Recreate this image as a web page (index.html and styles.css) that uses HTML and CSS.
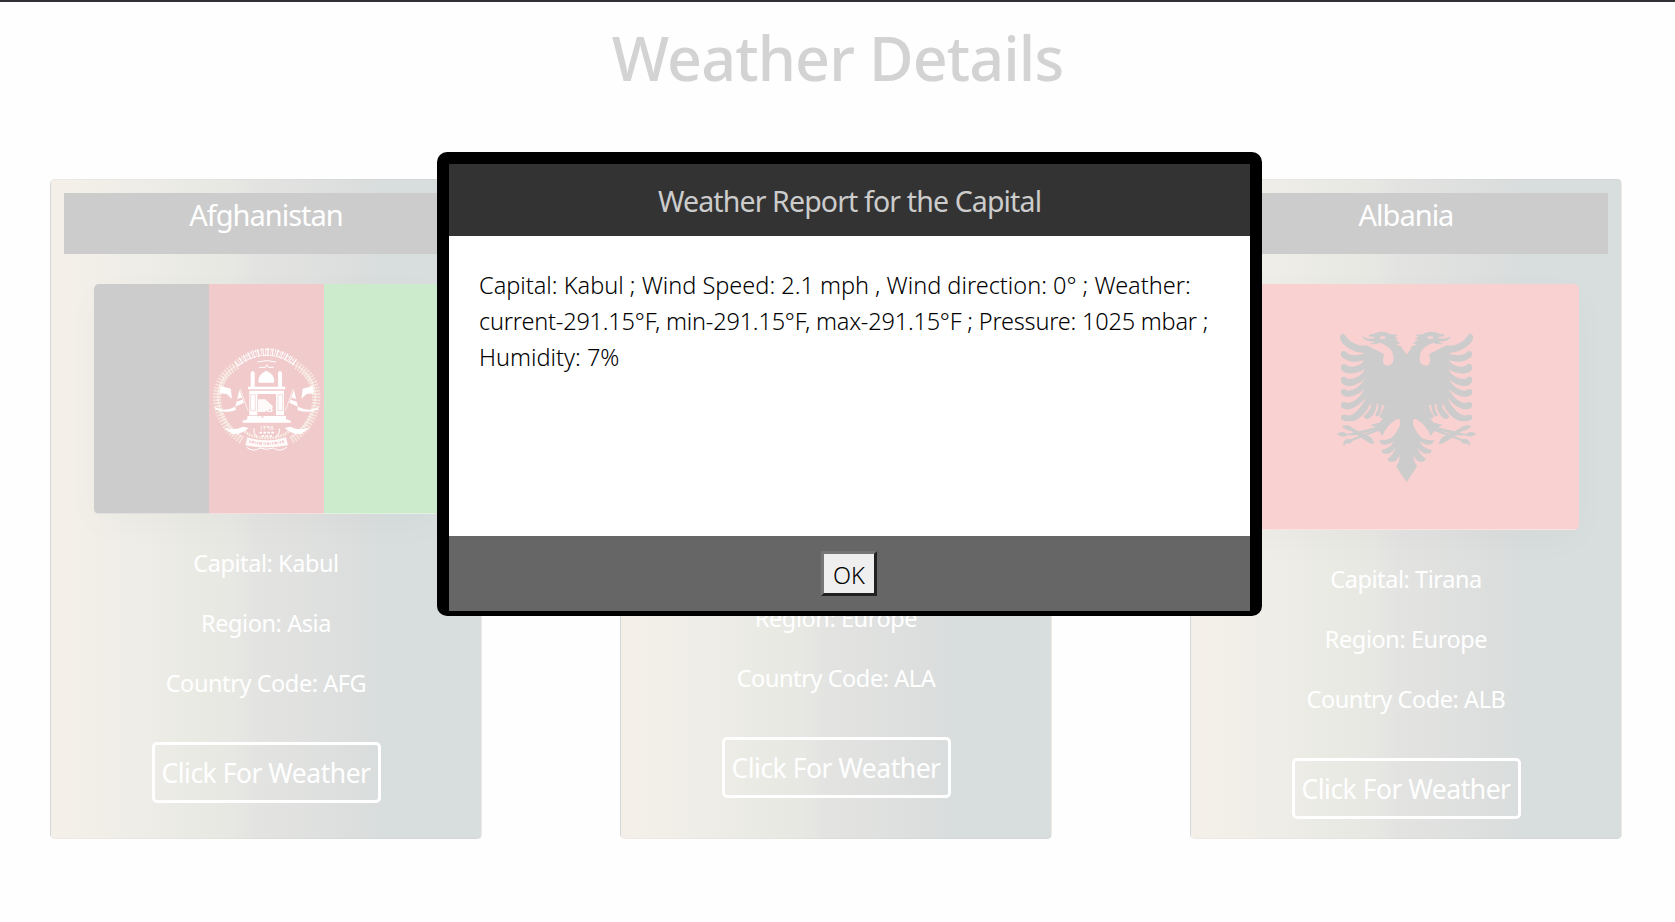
FILE: index.html
```html
<!DOCTYPE html>
<html lang="en">
<head>
<meta charset="utf-8">
<title>Weather Details</title>
<link rel="stylesheet" href="styles.css">
</head>
<body>
<main class="page">
  <h1 class="title">Weather Details</h1>
  <div class="cards">
    <section class="card">
      <h2 class="card-head">Afghanistan</h2>
      <svg class="flag" viewBox="0 0 345 230" height="230">
        <rect width="115" height="230" fill="#ccc"/>
        <rect x="115" width="115" height="230" fill="#f1cacb"/>
        <rect x="230" width="115" height="230" fill="#cceacc"/>
        <rect y="229" width="345" height="1" fill="#fff" opacity=".4"/>
        <g transform="translate(106 46) scale(.33333)" fill="none" stroke="#fff">
          <!-- wheat wreath -->
          <g stroke="#f8efe4">
            <path d="M112 106C28 144 28 270 128 332M288 106C372 144 372 270 272 332" stroke-width="24" stroke-dasharray="5 4" opacity=".7"/>
            <path d="M108 108C34 146 32 264 128 322M292 108C366 146 368 264 272 322" stroke="#fff" stroke-width="2"/>
            <path d="M98 122C42 166 42 250 104 310M302 122C358 166 358 250 296 310" stroke-width="14" stroke-dasharray="3 6"/>
            <path d="M128 298Q150 324 200 324T272 298" stroke-width="8" stroke-dasharray="5 3"/>
          </g>
          <!-- ribbons -->
          <g fill="#fff" stroke="none">
            <path d="M62 168L92 176L96 206L80 192L58 190ZM338 168L308 176L304 206L320 192L342 190ZM44 230Q70 248 106 230L108 240Q76 252 46 238ZM356 230Q330 248 294 230L292 240Q324 252 354 238ZM68 292Q96 304 130 290L146 294Q124 314 98 312ZM332 292Q304 304 270 290L254 294Q276 314 302 312Z"/>
            <path d="M142 322Q200 340 258 322L264 346Q200 358 136 346Z" opacity=".9"/>
          </g>
          <path d="M148 334Q200 348 252 334" stroke="#f1cacb" stroke-width="7" stroke-dasharray="4 3 8 3 2 3"/>
          <path d="M140 352Q160 368 180 354Q200 362 220 354Q240 368 260 352" stroke-width="3"/>
          <!-- inscription arc -->
          <path d="M110 102Q200 28 290 102" stroke-width="22" stroke-dasharray="3 5 2 4 4 6 2 3"/>
          <path d="M112 108Q200 44 288 108" stroke-width="3" stroke-dasharray="22 3 12 4"/>
          <path d="M120 90Q200 26 280 90" stroke-width="3" stroke-dasharray="7 9 12 6"/>
          <path d="M172 96q28-8 56 0M178 112h18l4-8l5 8h16" stroke-width="3"/>
          <!-- mosque -->
          <g fill="#fff" stroke="none">
            <path d="M128 278V272L142 268V258H258V268L272 272V278ZM144 170H256V178H144ZM152 136V128q6-10 12 0v42h-12ZM234 136V128q6-10 12 0v42h-12ZM176 158Q172 134 199 122Q226 134 222 158ZM148 182h24v74h-24ZM228 182h24v74h-24ZM172 182h56v10h-56Z"/>
            <path d="M174 208h22l22 20v18h-44Z" opacity=".9"/>
          </g>
          <path d="M152 194h14v48h-14ZM234 194h14v48h-14Z" stroke="#f1cacb" stroke-width="2"/>
          <path d="M174 258l48-24M184 262l40-18" stroke="#f1cacb" stroke-width="4" stroke-dasharray="7 5"/>
          <!-- banners -->
          <path d="M120 176l24 66M280 176l-24 66" stroke-width="2"/>
          <path d="M118 180l-12 50l26-12zM282 180l12 50l-26-12z" fill="#fff" stroke="none"/>
          <path d="M108 212l18-6M292 212l-18-6" stroke="#f1cacb" stroke-width="7"/>
          <text class="year" x="200" y="300">١٢٩٨</text>
          <path d="M178 308h44M184 318h32" stroke-width="5" stroke-dasharray="8 4"/>
          <path d="M162 296q-2 16 10 24M238 296q2 16-10 24" stroke-width="4" stroke-dasharray="5 2"/>
        </g>
      </svg>
      <p class="row">Capital: Kabul</p>
      <p class="row">Region: Asia</p>
      <p class="row">Country Code: AFG</p>
      <button class="weather">Click For Weather</button>
    </section>
    <section class="card">
      <h2 class="card-head"></h2>
      <svg class="flag" viewBox="0 0 345 225" height="225">
        <rect width="345" height="225" fill="#ccdded"/>
        <path d="M125 0v225M0 112h345" stroke="#fff3cc" stroke-width="60"/>
        <path d="M125 0v225M0 112h345" stroke="#f6ced2" stroke-width="26"/>
      </svg>
      <p class="row"></p>
      <p class="row">Region: Europe</p>
      <p class="row">Country Code: ALA</p>
      <button class="weather">Click For Weather</button>
    </section>
    <section class="card">
      <h2 class="card-head">Albania</h2>
      <svg class="flag" viewBox="0 0 345 246" height="246">
        <rect width="345" height="246" fill="#fad1d1"/>
        <rect y="245" width="345" height="1" fill="#fff" opacity=".4"/>
        <g transform="translate(86 26) scale(.33333)" fill="#ccc">
          <g id="half">
            <path d="M261 135L245 114L250 113L229 103L241 100L226 89L236 87L224 80L234 74L212 73Q196 62 172 67Q166 72 150 73L145 79L164 81L166 84L150 86Q136 86 127 77Q128 90 148 94L166 96L148 102Q168 104 180 98Q206 108 216 124Q224 146 218 158Q210 170 196 166Q186 158 190 144L192 132L138 105L130 112L133 240L138 266L158 276L170 281L209 289Q200 316 178 338L152 344L173 357L187 378Q200 346 230 328Q244 324 240 344Q230 372 210 386Q190 392 177 390Q180 406 200 404Q212 402 222 394Q210 416 184 420Q186 434 204 431Q218 428 228 412Q220 436 202 446Q206 458 222 455Q236 448 238 434Q242 450 228 469L259 515H261Z"/>
            <path d="M68 71C76 71 80 88 100 98C112 105 124 108 138 106L133 128C100 128 60 104 60 80Q61 72 68 71ZM63 130C66 120 76 122 82 130C95 138 115 136 132 131V150C115 156 95 158 80 150C68 144 60 138 63 130ZM63 170C64 160 76 160 82 167C98 174 118 168 133 152L131 180C115 188 100 192 85 190C70 188 61 180 63 170ZM63 208C62 198 76 199 82 206C98 209 118 202 133 182L131 209C115 222 95 230 82 228C68 225 62 218 63 208ZM63 245C62 234 74 236 84 242C100 242 118 232 133 208L134 236C118 252 95 262 80 260C68 258 62 253 63 245ZM63 284C62 274 76 274 84 279C100 278 118 264 134 236L139 262C118 288 95 300 80 298C68 296 62 292 63 284ZM63 322C62 312 76 313 86 317C102 314 122 296 138 264L158 276C140 304 118 334 90 334C70 334 62 330 63 322Z"/>
            <path d="M154 276C156 304 134 310 132 319C134 332 150 328 158 316Q172 298 170 278ZM174 280C178 300 168 308 166 314C168 322 176 320 180 312Q186 300 186 282ZM192 284C192 300 180 312 179 320C182 330 192 326 198 316L209 290Z"/>
            <path d="M50 373Q62 363 72 367L82 372L174 350V358L110 376L82 376Q70 386 50 373ZM65 347Q88 342 97 354L120 366L150 380Q162 388 162 403Q146 400 134 390L92 362Q74 360 65 347ZM71 410Q66 392 82 386L92 388L174 356L178 362L98 392Q92 404 78 400Z"/>
          </g>
          <use href="#half" transform="translate(519.5 0) scale(-1 1)"/>
          <ellipse cx="188" cy="83" rx="9" ry="4" fill="#fad1d1"/>
          <ellipse cx="331" cy="83" rx="9" ry="4" fill="#fad1d1"/>
          <path d="M150 283Q148 296 138 308M174 284L168 302M189 288L182 308M370 283Q371 296 381 308M345 284L351 302M330 288L337 308" stroke="#fad1d1" stroke-width="3" fill="none"/>
        </g>
      </svg>
      <p class="row">Capital: Tirana</p>
      <p class="row">Region: Europe</p>
      <p class="row">Country Code: ALB</p>
      <button class="weather">Click For Weather</button>
    </section>
  </div>
</main>
<div class="dialog" role="dialog">
  <div class="dialog-head">Weather Report for the Capital</div>
  <div class="dialog-body">Capital: Kabul ; Wind Speed: 2.1 mph , Wind direction: 0° ; Weather:<br><span class="readings">current-291.15°F, min-291.15°F, max-291.15°F ; Pressure: 1025 mbar ;</span><br>Humidity: 7%</div>
  <div class="dialog-foot"><button class="ok">OK</button></div>
</div>
</body>
</html>
```
FILE: styles.css
```css
* { box-sizing: border-box; }
body {
  margin: 0;
  height: 922px;
  overflow: hidden;
  background: #fefefe;
  font-family: "Noto Sans", "Open Sans", sans-serif;
  color: #fff;
}
.page { border-top: 2px solid #323035; }
.title {
  margin: 16px 0 81px;
  text-align: center;
  font-size: 61px;
  line-height: 80px;
  font-weight: 540;
  letter-spacing: -.9px;
  color: #d3d3d3;
}
.cards {
  display: flex;
  gap: 138px;
  padding-left: 50px;
}
.card {
  flex: none;
  width: 432px;
  height: 660px;
  padding: 13px;
  display: flex;
  flex-direction: column;
  align-items: center;
  border: 1px solid rgba(0, 0, 0, .025);
  border-radius: 5px;
  background: linear-gradient(to right, #f4f0e9, #f3f0e9 5%, #e7e8e3 42%, #e3e4e2 48%, #dcdedd 70%, #d8dddd 78%, #d8dddd);
}
.card-head {
  align-self: stretch;
  flex: none;
  height: 61px;
  margin: 0 0 30px;
  background: #ccc;
  text-align: center;
  font-size: 29px;
  line-height: 43px;
  font-weight: 400;
  letter-spacing: -1px;
}
.flag {
  flex: none;
  width: 345px;
  margin-bottom: 31px;
  border-radius: 5px;
  box-shadow: 0 10px 40px rgba(0, 0, 0, .022);
}
.year {
  font: 20px "DejaVu Sans", sans-serif;
  text-anchor: middle;
  fill: #fff;
  stroke: none;
}
.row {
  height: 36px;
  margin: 0 0 24px;
  font-size: 23.5px;
  line-height: 36px;
  letter-spacing: -.43px;
}
.weather {
  margin-top: 17px;
  width: 229px;
  height: 61px;
  padding: 2px 0 0;
  border: 3px solid #fff;
  border-radius: 5px;
  background: none;
  color: #fff;
  font-family: inherit;
  font-size: 26.5px;
  line-height: 53px;
  letter-spacing: -.5px;
  white-space: nowrap;
}
.dialog {
  position: absolute;
  left: 437px;
  top: 152px;
  width: 825px;
  height: 464px;
  padding: 12px 12px 5px;
  border-radius: 10px;
  background: #000;
}
.dialog-head {
  height: 72px;
  background: #333;
  color: #ccc;
  text-align: center;
  font-size: 28.5px;
  line-height: 75px;
  letter-spacing: -.87px;
}
.dialog-body {
  height: 300px;
  padding: 31px 30px;
  background: #fff;
  color: #000;
  font-size: 23.5px;
  font-weight: 300;
  line-height: 36px;
  white-space: nowrap;
}
.readings { letter-spacing: -.2px; }
.dialog-foot {
  display: flex;
  justify-content: center;
  height: 75px;
  padding: 15px 1px 0 0;
  background: #666;
}
.ok {
  width: 56px;
  height: 45px;
  padding: 3px 0 0;
  border: 3px solid;
  border-color: #767676 #212121 #212121 #767676;
  background: #efefef;
  color: #000;
  font-family: inherit;
  font-size: 23.5px;
  font-weight: 300;
  line-height: 36px;
}
```
